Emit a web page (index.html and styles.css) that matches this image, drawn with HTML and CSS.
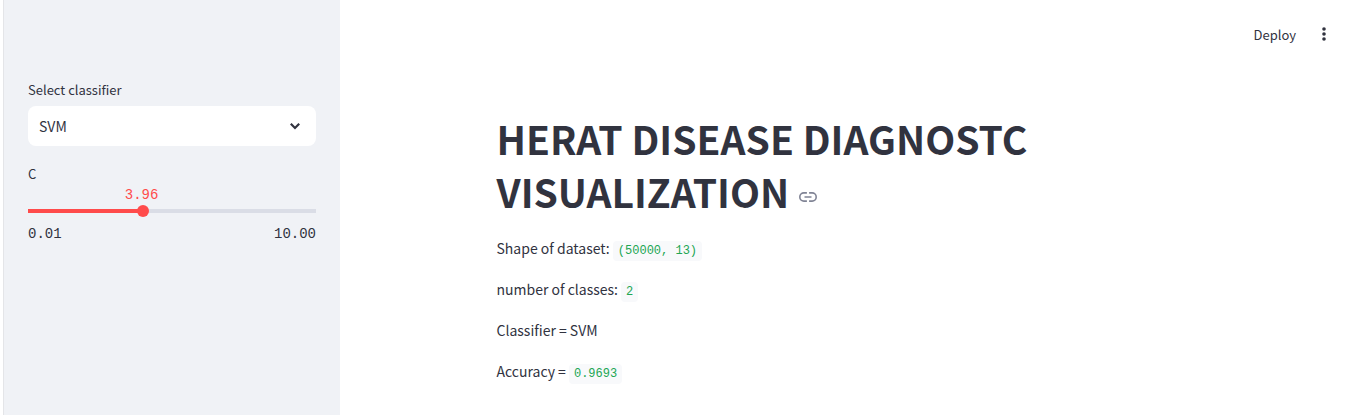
FILE: index.html
```html
<!DOCTYPE html>
<html lang="en">
<head>
<meta charset="utf-8">
<meta name="viewport" content="width=device-width, initial-scale=1">
<title>Heart disease visualization</title>
<link rel="stylesheet" href="styles.css">
</head>
<body>
<div class="app">
  <aside class="sidebar">
    <div class="field">
      <label class="field-label" for="classifier">Select classifier</label>
      <div class="select-wrap">
        <select class="select" id="classifier">
          <option selected>SVM</option>
        </select>
        <svg class="select-arrow" viewBox="0 0 16 16" aria-hidden="true"><path d="M3.8 5.8 8 10l4.2-4.2" fill="none" stroke="currentColor" stroke-width="2.2"/></svg>
      </div>
    </div>
    <div class="field">
      <label class="field-label" for="c-value">C</label>
      <div class="slider" style="--pos: 39.5%">
        <div class="slider-value-row"><output class="slider-value" for="c-value">3.96</output></div>
        <input class="range" id="c-value" type="range" min="0.01" max="10" step="0.01" value="3.96">
        <div class="slider-ends"><span>0.01</span><span>10.00</span></div>
      </div>
    </div>
  </aside>
  <div class="content">
    <header class="toolbar">
      <button class="deploy" type="button">Deploy</button>
      <button class="menu" type="button" aria-label="Main menu">
        <svg class="menu-icon" viewBox="0 0 16 16" aria-hidden="true"><g fill="currentColor"><circle cx="8" cy="3" r="1.8"/><circle cx="8" cy="8" r="1.8"/><circle cx="8" cy="13" r="1.8"/></g></svg>
      </button>
    </header>
    <main class="main">
      <h1 class="title">HERAT DISEASE DIAGNOSTC VISUALIZATION<a class="anchor" href="#" aria-label="Link to heading"><svg class="anchor-icon" viewBox="0 0 20 12" aria-hidden="true"><path d="M8.9 1.9H5.9a4.1 4.1 0 0 0 0 8.2h3M11.1 1.9h3a4.1 4.1 0 0 1 0 8.2h-3M6.5 6h7" fill="none" stroke="currentColor" stroke-width="1.6"/></svg></a></h1>
      <p class="line">Shape of dataset: <code class="code">(50000, 13)</code></p>
      <p class="line">number of classes: <code class="code">2</code></p>
      <p class="line">Classifier = SVM</p>
      <p class="line">Accuracy = <code class="code">0.9693</code></p>
    </main>
  </div>
</div>
</body>
</html>
```
FILE: styles.css
```css
* {
  box-sizing: border-box;
}

body {
  margin: 0;
  background: #fff;
  color: #31333f;
  font-family: "Noto Sans CJK SC", "Noto Sans", sans-serif;
  font-size: 14px;
}

.app {
  display: flex;
  min-height: 100vh;
  padding-left: 3px;
}

.sidebar {
  display: flex;
  flex-direction: column;
  flex: none;
  gap: 18px;
  width: 337px;
  padding: 80px 24px 24px;
  border-left: 1px solid #e4e5e8;
  background: #f0f2f6;
}

.field {
  display: flex;
  flex-direction: column;
  gap: 6px;
}

.field-label {
  font-size: 13px;
  line-height: 20px;
}

.select-wrap {
  position: relative;
}

.select {
  display: block;
  width: 100%;
  height: 40px;
  padding: 0 36px 0 11px;
  border: 0;
  border-radius: 8px;
  background: #fff;
  color: inherit;
  font: inherit;
  appearance: none;
}

.select-arrow {
  position: absolute;
  top: 12px;
  right: 13px;
  width: 16px;
  height: 16px;
  pointer-events: none;
}

.slider {
  margin-top: -5px;
  font-family: "Liberation Mono", monospace;
  font-size: 14px;
  line-height: 20px;
}

.slider-value-row {
  width: var(--pos);
  display: flex;
  justify-content: flex-end;
}

.slider-value {
  width: 34px;
  margin-right: -17px;
  color: #ff4b4b;
}

.range {
  display: block;
  width: 100%;
  height: 12px;
  margin: 0;
  background: linear-gradient(to right, #ff4b4b var(--pos), #dadde6 var(--pos)) center / 100% 4px no-repeat;
  border-radius: 2px;
  appearance: none;
}

.range::-webkit-slider-thumb {
  width: 12px;
  height: 12px;
  border-radius: 50%;
  background: #ff4b4b;
  appearance: none;
}

.slider-ends {
  display: flex;
  justify-content: space-between;
  margin-top: 7px;
}

.content {
  flex: 1;
  min-width: 0;
}

.toolbar {
  display: flex;
  justify-content: flex-end;
  align-items: center;
  gap: 20px;
  height: 68px;
  padding-right: 13px;
}

.deploy,
.menu {
  padding: 0;
  border: 0;
  background: none;
  color: inherit;
  font: inherit;
  font-size: 13px;
}

.menu,
.menu-icon {
  display: block;
  width: 16px;
  height: 16px;
}

.main {
  max-width: 736px;
  margin: 0 auto;
  padding: 44px 22px 16px;
}

.title {
  margin: 0 0 18px;
  font-size: 39px;
  font-weight: 700;
  line-height: 53px;
}

.anchor {
  display: inline-block;
  margin-left: 9px;
  color: #808495;
  line-height: 1;
  vertical-align: 5px;
}

.anchor-icon {
  display: block;
  width: 20px;
  height: 12px;
}

.line {
  margin: 0 0 16px;
  font-size: 14px;
  line-height: 25px;
}

.code {
  padding: 3px 5px;
  border-radius: 4px;
  background: #f8f9fb;
  color: #21a653;
  font-family: "Liberation Mono", monospace;
  font-size: 12px;
  line-height: 1;
}
```
